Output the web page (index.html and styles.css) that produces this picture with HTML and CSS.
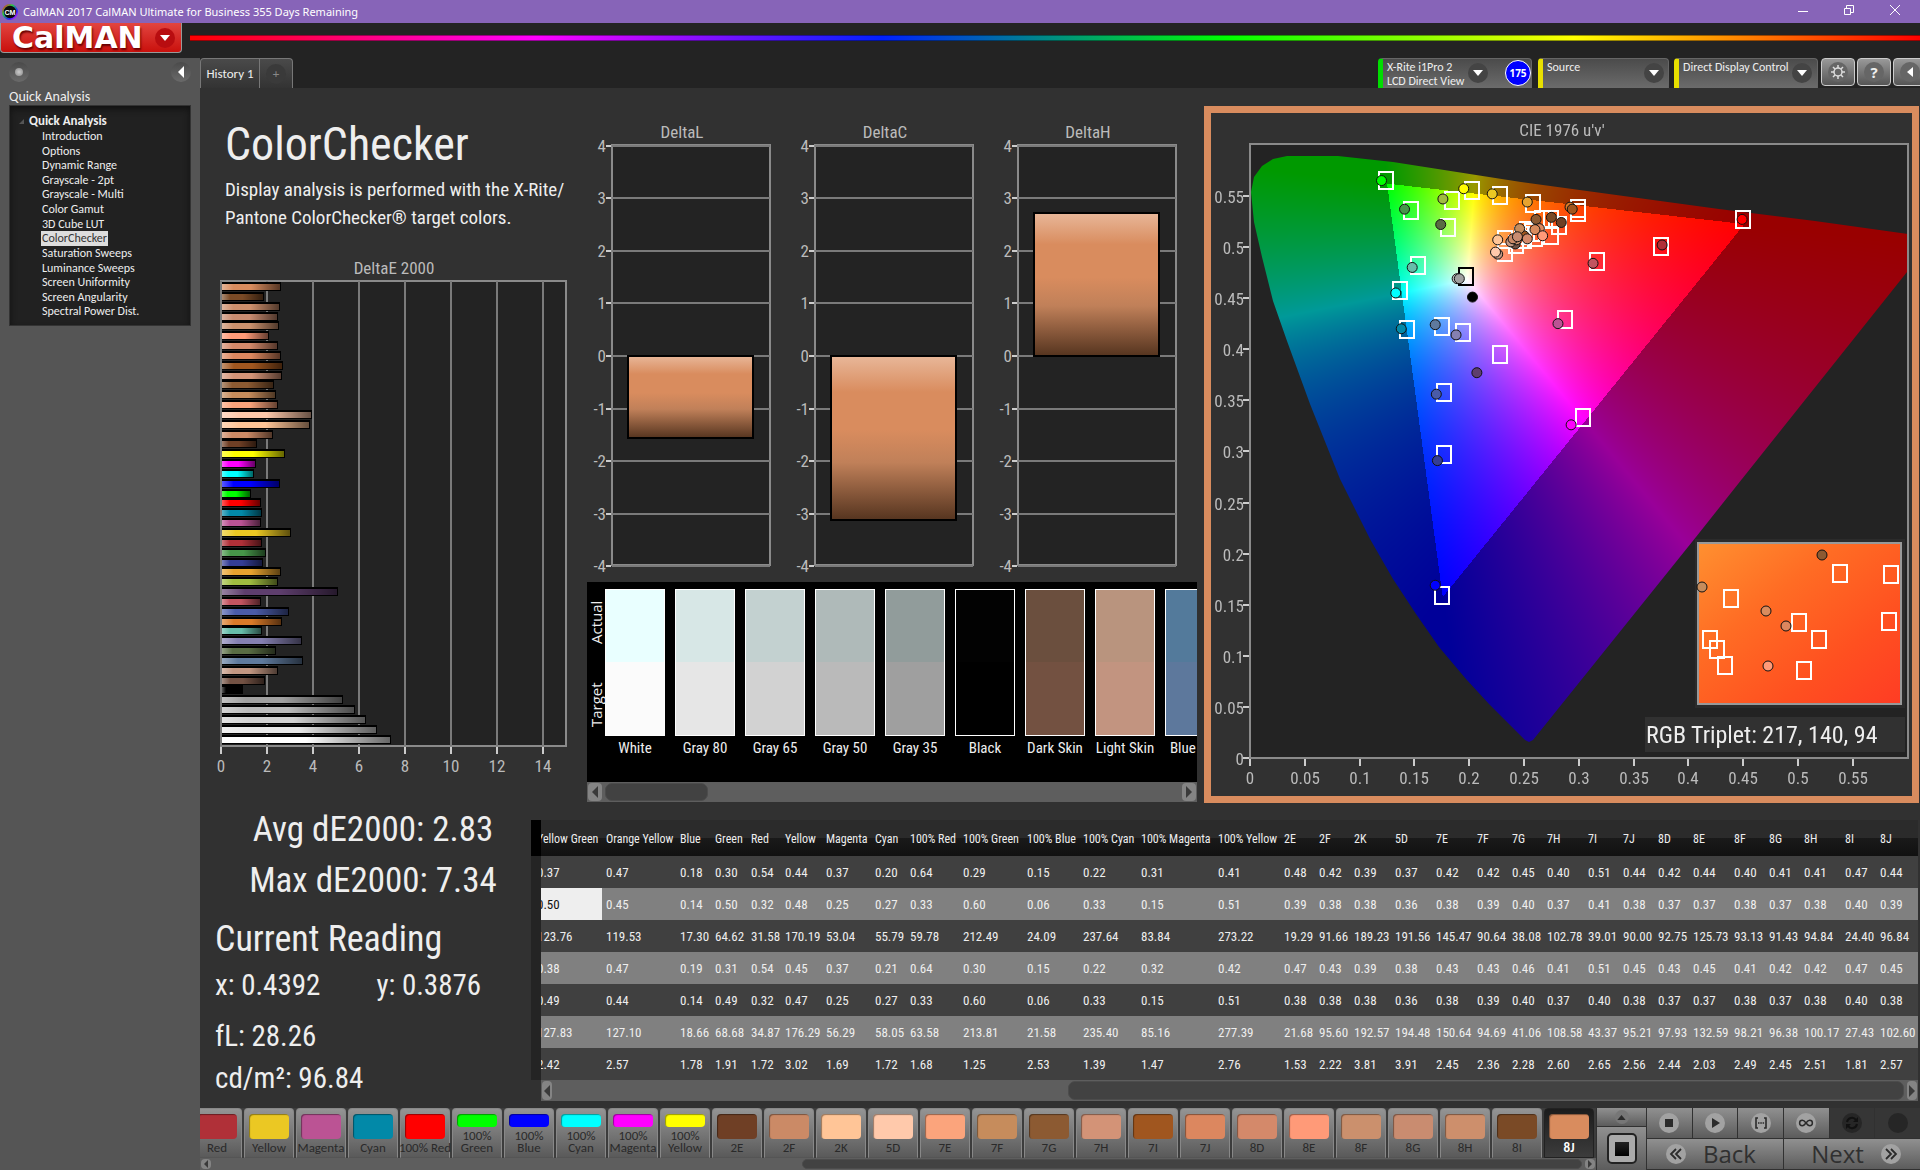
FILE: index.html
```
<!DOCTYPE html>
<html lang="en">
<head>
<meta charset="utf-8">
<title>CalMAN 2017</title>
<link rel="stylesheet" href="styles.css">
</head>
<body>
<div class="app">
  <header class="titlebar">
    <svg class="app-icon" viewBox="0 0 18 18"><defs><linearGradient id="ring" x1="0" y1="0" x2="1" y2="1"><stop offset="0" stop-color="#f22"/><stop offset=".35" stop-color="#2c4"/><stop offset=".7" stop-color="#22f"/><stop offset="1" stop-color="#e2e"/></linearGradient></defs><circle cx="9" cy="9" r="8" fill="#0a0a0a" stroke="url(#ring)" stroke-width="2"/><text x="9" y="12" text-anchor="middle" font-size="8" font-weight="700" fill="#fff">CM</text></svg>
    <span class="window-title">CalMAN 2017 CalMAN Ultimate for Business 355 Days Remaining</span>
    <button class="win-btn" aria-label="Minimize"><svg viewBox="0 0 12 12"><path d="M1 7.5h10"/></svg></button>
    <button class="win-btn" aria-label="Restore"><svg viewBox="0 0 12 12"><path d="M1.500 4.500h6v6h-6zM3.500 4V1.500h7v7H8"/></svg></button>
    <button class="win-btn" aria-label="Close"><svg viewBox="0 0 12 12"><path d="M1 1l10 10M11 1L1 11"/></svg></button>
  </header>
  <div class="brandbar">
    <button class="logo"><span>CalMAN</span><i class="logo-arrow"><svg viewBox="0 0 10 6"><path d="M0 0h10L5 6z" fill="#fff"/></svg></i></button>
    <div class="rainbow"></div>
  </div>
  <div class="body">
    <aside class="sidebar">
      <div class="side-top">
        <button class="knob" aria-label="Pin"><i></i></button>
        <button class="knob" aria-label="Collapse"><svg viewBox="0 0 6 12"><path d="M6 0v12L0 6z" fill="#fff"/></svg></button>
      </div>
      <h2 class="side-title">Quick Analysis</h2>
      <nav class="tree">
        <div class="tree-root"><svg viewBox="0 0 6 6"><path d="M6 0v6H0z" fill="#555"/></svg>Quick Analysis</div>
        <div class="tree-items">
          <a href="#">Introduction</a><a href="#">Options</a><a href="#">Dynamic Range</a><a href="#">Grayscale - 2pt</a><a href="#">Grayscale - Multi</a><a href="#">Color Gamut</a><a href="#">3D Cube LUT</a><a href="#" class="current">ColorChecker</a><a href="#">Saturation Sweeps</a><a href="#">Luminance Sweeps</a><a href="#">Screen Uniformity</a><a href="#">Screen Angularity</a><a href="#">Spectral Power Dist.</a>
        </div>
      </nav>
    </aside>
    <main class="main">
      <div class="tabrow">
        <div class="tabs"><button class="tab">History 1</button><button class="tab add" aria-label="Add tab"><i>+</i></button></div>
        <div class="devices">
          <div class="device green meter"><span>X-Rite i1Pro 2<br>LCD Direct View</span><button class="drop" aria-label="Meter menu"><svg viewBox="0 0 10 6"><path d="M0 0h10L5 6z"/></svg></button><b class="badge">175</b></div>
          <div class="device source"><span>Source</span><button class="drop" aria-label="Source menu"><svg viewBox="0 0 10 6"><path d="M0 0h10L5 6z"/></svg></button></div>
          <div class="device display"><span>Direct Display Control</span><button class="drop" aria-label="Display menu"><svg viewBox="0 0 10 6"><path d="M0 0h10L5 6z"/></svg></button></div>
          <button class="square" aria-label="Settings"><i><svg viewBox="0 0 14 14"><circle cx="7" cy="7" r="4" fill="none" stroke="#ddd" stroke-width="1.500"/><path d="M7 0v3M7 11v3M0 7h3M11 7h3M2 2l2 2M10 10l2 2M12 2l-2 2M2 12l2-2" stroke="#ddd" stroke-width="1.500"/></svg></i></button>
          <button class="square" aria-label="Help"><i>?</i></button>
          <button class="square" aria-label="Hide"><i><svg class="tri" viewBox="0 0 6 10"><path d="M6 0v10L0 5z" fill="#fff"/></svg></i></button>
        </div>
      </div>
      <div class="workspace">
        <section class="charts">
          <div class="col-left">
            <h1>ColorChecker</h1>
            <p class="lead">Display analysis is performed with the X-Rite/<br>Pantone ColorChecker® target colors.</p>
            <svg class="chart" id="delta-e" viewBox="0 0 387 524"></svg>
          </div>
          <div class="col-mid">
            <svg class="chart" id="deltas" viewBox="0 0 617 476"></svg>
            <div class="swatch-panel">
              <div class="swatch-view">
                <div class="swatch-side"><span>Actual</span><span>Target</span></div>
                <div class="swatches" id="swatches"></div>
              </div>
              <div class="scroll wide"><button aria-label="Scroll left"><svg viewBox="0 0 6 12"><path d="M6 0v12L0 6z"/></svg></button><div class="track"><div class="thumb"></div></div><button aria-label="Scroll right"><svg viewBox="0 0 6 12"><path d="M0 0v12L6 6z"/></svg></button></div>
            </div>
          </div>
          <div class="cie">
            <canvas id="gamut" width="701" height="683"></canvas>
            <svg class="chart" id="cie" viewBox="0 0 701 683"></svg>
          </div>
        </section>
        <section class="bottom">
          <div class="stats">
            <p class="big">Avg dE2000: 2.83</p>
            <p class="big">Max dE2000: 7.34</p>
            <h2>Current Reading</h2>
            <p class="pair"><span>x: 0.4392</span><span>y: 0.3876</span></p>
            <p class="fl">fL: 28.26</p>
            <p>cd/m²: 96.84</p>
          </div>
          <div class="grid-wrap">
            <table class="readings"><colgroup id="cols"></colgroup><thead id="thead"></thead><tbody id="tbody"></tbody></table>
            <div class="scroll table-scroll"><button aria-label="Scroll left"><svg viewBox="0 0 6 12"><path d="M6 0v12L0 6z"/></svg></button><div class="track"><div class="thumb"></div></div><button aria-label="Scroll right"><svg viewBox="0 0 6 12"><path d="M0 0v12L6 6z"/></svg></button></div>
          </div>
        </section>
      </div>
      <footer class="footer">
        <div class="patch-area">
          <div class="patches" id="patches"></div>
          <div class="scroll thin"><button aria-label="Scroll left"><svg viewBox="0 0 6 12"><path d="M6 0v12L0 6z"/></svg></button><div class="track"><div class="thumb"></div></div><button aria-label="Scroll right"><svg viewBox="0 0 6 12"><path d="M0 0v12L6 6z"/></svg></button></div>
        </div>
        <div class="stopcol">
          <button class="up" aria-label="Expand"><i><svg viewBox="0 0 10 6"><path d="M0 6h10L5 0z" fill="#2b2b2b"/></svg></i></button>
          <button class="window-btn" aria-label="Pattern window"><i></i></button>
        </div>
        <div class="transport">
          <button aria-label="Stop"><i><svg viewBox="0 0 20 20"><path d="M6 6h8v8H6z"/></svg></i></button>
          <button aria-label="Play"><i><svg viewBox="0 0 20 20"><path d="M7 5l8 5-8 5z"/></svg></i></button>
          <button aria-label="Read series"><i><svg viewBox="0 0 20 20"><path d="M7 5H5v10h2M13 5h2v10h-2M7 10h1.500M9.300 10h1.500M11.600 10h1.500" fill="none" stroke="#2b2b2b" stroke-width="1.600"/></svg></i></button>
          <button aria-label="Continuous"><i><svg viewBox="0 0 20 20"><path d="M10 10c-1.500-2-2.500-2.700-3.700-2.700a2.700 2.700 0 0 0 0 5.400C7.500 12.700 8.500 12 10 10s2.500-2.700 3.700-2.700a2.700 2.700 0 0 1 0 5.400C12.500 12.700 11.500 12 10 10z" fill="none" stroke="#2b2b2b" stroke-width="1.500"/></svg></i></button>
          <button class="off" aria-label="Refresh"><i><svg viewBox="0 0 20 20"><path d="M5 9a5 5 0 0 1 9-2M15 11a5 5 0 0 1-9 2" fill="none" stroke="#111" stroke-width="2"/><path d="M16 4v5h-5zM4 16v-5h5z" fill="#111"/></svg></i></button>
          <button class="off" aria-label="Empty"><i></i></button>
          <button class="nav back"><i><svg viewBox="0 0 20 20"><path d="M10 5l-5 5 5 5M15 5l-5 5 5 5" fill="none" stroke="#2b2b2b" stroke-width="1.800"/></svg></i>Back</button>
          <button class="nav next">Next<i><svg viewBox="0 0 20 20"><path d="M5 5l5 5-5 5M10 5l5 5-5 5" fill="none" stroke="#2b2b2b" stroke-width="1.800"/></svg></i></button>
        </div>
      </footer>
    </main>
  </div>
</div>
<script src="app.js"></script>
</body>
</html>
```
FILE: app.js
```
const byId = id => document.getElementById(id);

/* ---- DeltaE 2000 horizontal bars: [value, colour], top to bottom ---- */
const deltaE = [
  [2.57,'#d98c5e'],[1.81,'#7a4a26'],[2.51,'#cd8f6c'],[2.45,'#c98c70'],[2.49,'#cb906d'],[2.03,'#ff9a78'],
  [2.44,'#d4896a'],[2.56,'#dc875f'],[2.65,'#a0561f'],[2.60,'#d39377'],[2.28,'#8c5a32'],[2.36,'#c68c5c'],
  [2.45,'#fba47c'],[3.91,'#ffc9ab'],[3.81,'#ffc597'],[2.22,'#cb8a66'],[1.53,'#6f3f25'],[2.76,'#ffff00'],
  [1.47,'#ff00ff'],[1.39,'#00ffff'],[2.53,'#0000ff'],[1.25,'#00ff00'],[1.68,'#ff0000'],[1.72,'#0289a8'],
  [1.69,'#bb5394'],[3.02,'#ebc823'],[1.72,'#b03038'],[1.91,'#469649'],[1.78,'#343d95'],[2.57,'#e7a32f'],
  [2.42,'#a0bc40'],[5.05,'#5e3e6d'],[1.68,'#c35460'],[2.92,'#4a5ba8'],[2.60,'#da7a29'],[1.72,'#67bdaa'],
  [3.47,'#8580b1'],[2.33,'#596c43'],[3.52,'#5f7a9d'],[2.45,'#c39782'],[1.85,'#735244'],[0.92,'#000000'],
  [5.28,'#a0a0a0'],[5.80,'#bbbbbb'],[6.28,'#d2d2d2'],[6.72,'#e8e8e8'],[7.34,'#ffffff']
];

function drawDeltaE() {
  const x0 = 21, top = 25, bottom = 490, right = 366, unit = 23;
  let s = `<defs><linearGradient id="shadeH"><stop offset="0" stop-color="#fff" stop-opacity=".35"/><stop offset=".2" stop-color="#fff" stop-opacity="0"/><stop offset=".5" stop-color="#000" stop-opacity="0"/><stop offset="1" stop-color="#000" stop-opacity=".6"/></linearGradient></defs>`;
  s += `<text x="194" y="18" class="mid">DeltaE 2000</text><rect x="${x0}" y="${top}" width="${right - x0}" height="${bottom - top}" class="plot"/>`;
  for (let v = 0; v <= 14; v += 2) {
    const x = x0 + v * unit;
    s += `<path d="M${x} ${top}V${bottom}" class="rule"/><path d="M${x} ${bottom + 1}v7" class="tick"/><text x="${x}" y="${bottom + 26}" class="mid">${v}</text>`;
  }
  deltaE.forEach(([v, c], i) => {
    const y = Math.round(27 + i * 9.84), w = Math.round(v * unit);
    s += `<rect x="${x0 + 1}" y="${y - 1}" width="${w}" height="9" fill="#000"/><rect x="${x0 + 1}" y="${y + 1}" width="${w - 1}" height="6" fill="${c}"/><rect x="${x0 + 1}" y="${y + 1}" width="${w - 1}" height="6" fill="url(#shadeH)"/>`;
  });
  byId('delta-e').innerHTML = s;
}

function drawDeltas() {
  let s = `<defs><linearGradient id="shadeV" x1="0" y1="0" x2="0" y2="1"><stop offset="0" stop-color="#e8b799"/><stop offset=".22" stop-color="#d98c5e"/><stop offset=".45" stop-color="#d98c5e"/><stop offset=".65" stop-color="#c08059"/><stop offset="1" stop-color="#55341f"/></linearGradient></defs>`;
  [['DeltaL', 25, -1.55], ['DeltaC', 228, -3.12], ['DeltaH', 431, 2.72]].forEach(([name, x, v]) => {
    const zero = 250, unit = 52.6;
    s += `<text x="${x + 70}" y="32" class="mid">${name}</text><rect x="${x}" y="39" width="158" height="420" class="plot"/>`;
    for (let k = -4; k <= 4; k++) {
      const y = Math.round(zero - k * unit);
      s += `<path d="M${x} ${y}h158" class="rule"/><path d="M${x - 6} ${y}h5" class="tick"/><text x="${x - 6}" y="${y + 6}" class="end">${k}</text>`;
    }
    const h = Math.round(Math.abs(v) * unit);
    s += `<rect x="${x + 16}" y="${v > 0 ? zero - h : zero}" width="125" height="${h}" fill="url(#shadeV)" stroke="#000" stroke-width="2"/>`;
  });
  byId('deltas').innerHTML = s;
}

/* ---- CIE 1976 u'v' diagram. Points are [u' x 1000, v' x 1000] ---- */
const X = u => 39 + u * 1.096, Y = v => 645 - v * 1.022;
const targets = [[124,565],[203,555],[228,550],[184,545],[147,535],[181,519],[258,542],[299,537],[299,533],[450,526],[375,500],[317,485],[153,481],[137,457],[143,419],[175,422],[194,416],[287,429],[228,394],[177,357],[304,333],[177,296],[175,159],[233,507],[233,494],[243,502],[250,507],[253,516],[266,526],[275,526],[282,521],[275,511],[260,509],[257,514],[248,511]];
const actuals = [[120,565,'#0f0'],[195,557,'#ff0'],[221,552,'#ebc823'],[176,547,'#a0bc40'],[141,537,'#469649'],[174,522,'#596c43'],[253,544,'#e7a32f'],[292,539,'#da7a29'],[294,537,'#a0561f'],[449,527,'#f00'],[376,502,'#b03038'],[313,484,'#c35460'],[148,480,'#67bdaa'],[189,469,'#bbb'],[191,469,'#a0a0a0'],[133,455,'#0ff'],[203,451,'#000'],[138,420,'#0289a8'],[169,424,'#5f7a9d'],[188,414,'#8580b1'],[281,425,'#bb5394'],[207,377,'#5e3e6d'],[170,356,'#4a5ba8'],[293,326,'#f0f'],[171,291,'#343d95'],[169,169,'#00f'],[261,527,'#8c5a32'],[275,529,'#7a4a26'],[284,524,'#6f3f25'],[226,507,'#ffc597'],[226,493,'#c39782'],[224,495,'#ffc9ab'],[250,511,'#a0561f'],[246,518,'#c68c5c'],[242,503,'#735244'],[238,505,'#c39782'],[243,507,'#cb906d'],[240,508,'#cb8a66'],[244,510,'#c98c70'],[253,508,'#d4896a'],[264,518,'#dc875f'],[260,517,'#d98c5e'],[267,511,'#ff9a78']];
const zoomTargets = [[520,486],[629,461],[680,462],[678,509],[588,510],[608,527],[499,527],[506,537],[514,553],[593,558]];
const zoomActuals = [[611,442,'#8c5a32'],[491,474,'#c68c5c'],[555,498,'#d98c5e'],[575,513,'#dc875f'],[557,553,'#ff9a78']];

function drawGamut() {
  const ctx = byId('gamut').getContext('2d');
  ctx.fillStyle = '#232323';
  ctx.fillRect(39, 31, 658, 614);
  const locus = [[37,12],[88,12],[143,18],[271,38],[469,65],[565,77],[680,93],[657,128],[492,335],[446,393],[283,596],[279,598],[275,596],[267,588],[239,560],[216,535],[189,503],[166,470],[143,435],[120,395],[90,335],[60,260],[37,197],[23,157],[12,113],[4,78],[1,48],[4,33],[12,22],[23,15]];
  const layer = document.createElement('canvas');
  layer.width = 701; layer.height = 683;
  const lc = layer.getContext('2d');
  const img = lc.createImageData(701, 683);
  const tri = [[124.6,562.5],[450.7,522.9],[175.4,157.9]];
  const side = (p, a, b) => (b[0] - a[0]) * (p[1] - a[1]) - (b[1] - a[1]) * (p[0] - a[0]);
  for (let y = 31; y < 645; y++) for (let x = 39; x < 697; x++) {
    const U = (x - 39) / 1.096, V = (645 - y) / 1.022, u = U / 1000, v = V / 1000;
    const d = 6 * u - 16 * v + 12, cx = 9 * u / d, cy = Math.max(4 * v / d, 1e-4);
    const A = cx / cy, C = (1 - cx - cy) / cy;
    const rgb = [3.2406 * A - 1.5372 - 0.4986 * C, -0.9689 * A + 1.8758 + 0.0415 * C, 0.0557 * A - 0.2040 + 1.0570 * C].map(n => Math.max(n, 0));
    const m = Math.max(...rgb), p = [U, V];
    const inside = side(p, tri[0], tri[1]) <= 0 && side(p, tri[1], tri[2]) <= 0 && side(p, tri[2], tri[0]) <= 0;
    const k = inside ? 255 : 153, o = (y * 701 + x) * 4;
    rgb.forEach((n, i) => { img.data[o + i] = k * n / m; });
    img.data[o + 3] = 255;
  }
  lc.putImageData(img, 0, 0);
  ctx.save();
  ctx.beginPath();
  ctx.rect(39, 31, 658, 614);
  ctx.clip();
  ctx.beginPath();
  locus.forEach(([x, y]) => ctx.lineTo(x + 39, y + 31));
  ctx.closePath();
  ctx.clip();
  ctx.drawImage(layer, 0, 0);
  ctx.restore();
}

function drawCie() {
  const box = (x, y, c = '#fff') => `<rect x="${Math.round(x) - 7}" y="${Math.round(y) - 9}" width="14" height="17" fill="none" stroke="${c}" stroke-width="2"/>`;
  const dot = (x, y, c) => `<circle cx="${x}" cy="${y}" r="5" fill="${c}" stroke="#111"/>`;
  let s = `<defs><linearGradient id="warm" x1="0" y1="0" x2="1" y2="1"><stop offset="0" stop-color="#ff9030"/><stop offset=".35" stop-color="#ff6c24"/><stop offset=".7" stop-color="#ff5020"/><stop offset="1" stop-color="#ff3c24"/></linearGradient></defs>`;
  s += `<text x="351" y="23" class="mid">CIE 1976 u'v'</text><rect x="39" y="31" width="658" height="614" class="outline"/>`;
  for (let i = 0; i < 12; i++) {
    const n = String(i * 5 / 100), x = Math.round(X(i * 50)), y = Math.round(Y(i * 50));
    s += `<path d="M${x} 646v7M38 ${y}h-6" class="tick"/><text x="${x}" y="671" class="mid">${n}</text><text x="33" y="${y + 7}" class="end">${n}</text>`;
  }
  s += targets.map(([u, v]) => box(X(u), Y(v))).join('') + box(X(197), Y(471), '#000');
  s += actuals.map(([u, v, c]) => dot(X(u), Y(v), c)).join('');
  s += `<rect x="484" y="426" width="210" height="169" fill="#2b2b2b"/><rect x="487" y="430" width="203" height="161" fill="url(#warm)" stroke="#999" stroke-width="2"/>`;
  s += zoomTargets.map(([x, y]) => box(x, y)).join('') + zoomActuals.map(([x, y, c]) => dot(x, y, c)).join('');
  s += `<rect x="434" y="604" width="260" height="35" fill="#313131"/><text x="435" y="630" class="triplet">RGB Triplet: 217, 140, 94</text>`;
  byId('cie').innerHTML = s;
}

/* ---- Actual / target swatches ---- */
const swatches = [['White','#e9ffff','#fbfbfb'],['Gray 80','#d7e7e6','#e6e6e6'],['Gray 65','#c3d1d0','#d2d2d2'],['Gray 50','#afbab9','#bababa'],['Gray 35','#919c9b','#9f9f9f'],['Black','#020202','#000000'],['Dark Skin','#6b4f3e','#735141'],['Light Skin','#b9947e','#c29480'],['Blue Sky','#537a9b','#5d789c']];
byId('swatches').innerHTML = swatches.map(([n, a, t]) => `<figure><div style="background:linear-gradient(${a} 50%,${t} 50%)"></div><figcaption>${n}</figcaption></figure>`).join('');

/* ---- Readings table: name, column width, then one value per row ---- */
const readings = `Yellow Green|61|0.37|0.50|123.76|0.38|0.49|127.83|2.42
Orange Yellow|74|0.47|0.45|119.53|0.47|0.44|127.10|2.57
Blue|35|0.18|0.14|17.30|0.19|0.14|18.66|1.78
Green|36|0.30|0.50|64.62|0.31|0.49|68.68|1.91
Red|34|0.54|0.32|31.58|0.54|0.32|34.87|1.72
Yellow|41|0.44|0.48|170.19|0.45|0.47|176.29|3.02
Magenta|49|0.37|0.25|53.04|0.37|0.25|56.29|1.69
Cyan|35|0.20|0.27|55.79|0.21|0.27|58.05|1.72
100% Red|53|0.64|0.33|59.78|0.64|0.33|63.58|1.68
100% Green|64|0.29|0.60|212.49|0.30|0.60|213.81|1.25
100% Blue|56|0.15|0.06|24.09|0.15|0.06|21.58|2.53
100% Cyan|58|0.22|0.33|237.64|0.22|0.33|235.40|1.39
100% Magenta|77|0.31|0.15|83.84|0.32|0.15|85.16|1.47
100% Yellow|66|0.41|0.51|273.22|0.42|0.51|277.39|2.76
2E|35|0.48|0.39|19.29|0.47|0.38|21.68|1.53
2F|35|0.42|0.38|91.66|0.43|0.38|95.60|2.22
2K|41|0.39|0.38|189.23|0.39|0.38|192.57|3.81
5D|41|0.37|0.36|191.56|0.38|0.36|194.48|3.91
7E|41|0.42|0.38|145.47|0.43|0.38|150.64|2.45
7F|35|0.42|0.39|90.64|0.43|0.39|94.69|2.36
7G|35|0.45|0.40|38.08|0.46|0.40|41.06|2.28
7H|41|0.40|0.37|102.78|0.41|0.37|108.58|2.60
7I|35|0.51|0.41|39.01|0.51|0.40|43.37|2.65
7J|35|0.44|0.38|90.00|0.45|0.38|95.21|2.56
8D|35|0.42|0.37|92.75|0.43|0.37|97.93|2.44
8E|41|0.44|0.37|125.73|0.45|0.37|132.59|2.03
8F|35|0.40|0.38|93.13|0.41|0.38|98.21|2.49
8G|35|0.41|0.37|91.43|0.42|0.37|96.38|2.45
8H|41|0.41|0.38|94.84|0.42|0.38|100.17|2.51
8I|35|0.47|0.40|24.40|0.47|0.40|27.43|1.81
8J|42|0.44|0.39|96.84|0.45|0.38|102.60|2.57`.split('\n').map(r => r.split('|'));
byId('cols').innerHTML = '<col style="width:10px">' + readings.map(r => `<col style="width:${r[1]}px">`).join('');
byId('thead').innerHTML = '<tr><td class="strip"></td>' + readings.map(r => `<th scope="col">${r[0]}</th>`).join('') + '</tr>';
byId('tbody').innerHTML = [2, 3, 4, 5, 6, 7, 8].map(k => '<tr><td class="strip"></td>' + readings.map((r, i) => `<td${k === 3 && i === 0 ? ' class="selected"' : ''}>${r[k]}</td>`).join('') + '</tr>').join('');

/* ---- Patch strip ---- */
const patches = [['Red','#b03038'],['Yellow','#ebc823'],['Magenta','#bb5394'],['Cyan','#0289a8'],['100% Red','#ff0000'],['100%<br>Green','#00ff00'],['100%<br>Blue','#0000ff'],['100%<br>Cyan','#00ffff'],['100%<br>Magenta','#ff00ff'],['100%<br>Yellow','#ffff00'],['2E','#6f3f25'],['2F','#cb8a66'],['2K','#ffc597'],['5D','#ffc9ab'],['7E','#fba47c'],['7F','#c68c5c'],['7G','#8c5a32'],['7H','#d39377'],['7I','#a0561f'],['7J','#dc875f'],['8D','#d4896a'],['8E','#ff9a78'],['8F','#cb906d'],['8G','#c98c70'],['8H','#cd8f6c'],['8I','#7a4a26'],['8J','#d98c5e']];
byId('patches').innerHTML = patches.map(([n, c], i) => `<button class="patch${i === patches.length - 1 ? ' active' : ''}"><i style="background:${c}"></i><span>${n}</span></button>`).join('');

drawDeltaE();
drawDeltas();
drawGamut();
drawCie();
```
FILE: styles.css
```
* { box-sizing: border-box; margin: 0; padding: 0; }
:root { --ui: Carlito, Lato, "Noto Sans", sans-serif; --narrow: "Roboto Condensed", Carlito, Roboto, sans-serif; }
body { background: #232323; color: #eee; font: 13px/16px var(--ui); }
button { font: inherit; color: inherit; border: 0; background: none; display: flex; align-items: center; justify-content: center; }
a { color: inherit; text-decoration: none; }
i { font-style: normal; }
svg { display: block; }
.app { min-height: 100vh; display: flex; flex-direction: column; overflow: hidden; }

.titlebar { height: 23px; background: #8764b8; display: flex; align-items: center; padding: 0 10px 0 2px; }
.app-icon { width: 16px; height: 16px; margin-right: 5px; font-family: "Liberation Sans", sans-serif; }
.window-title { flex: 1; font: 11px/16px "Noto Sans", sans-serif; color: #fff; }
.win-btn { width: 46px; height: 20px; padding-bottom: 3px; }
.win-btn:last-child { width: 30px; margin-left: 8px; }
.win-btn svg { width: 12px; height: 12px; fill: none; stroke: #fff; }

.brandbar { height: 35px; display: flex; align-items: flex-start; gap: 8px; }
.logo { width: 182px; height: 30px; background: linear-gradient(#e24540, #c9100c); border: 1px solid #999; border-top: 0; border-radius: 0 0 4px 4px; justify-content: flex-start; padding-left: 11px; gap: 12px; color: #fff; }
.logo span { font: bold 30px/28px "DejaVu Sans", sans-serif; text-shadow: 1px 2px 2px #600; }
.logo-arrow { width: 20px; height: 20px; border-radius: 50%; background: #b80d10; display: flex; align-items: center; justify-content: center; }
.logo-arrow svg { width: 10px; height: 6px; }
.rainbow { flex: 1; height: 6px; margin-top: 12px; border: solid rgba(0,0,0,.4); border-width: 1px 0; background: linear-gradient(90deg, #f00, #f0f 20%, #0020ff 40%, #0f0 60%, #ff0 80%, #f00); }

.body { flex: 1; display: grid; grid-template-columns: 200px minmax(0, 1fr); }
.sidebar { background: #555; padding: 4px 9px; }
.side-top { display: flex; justify-content: space-between; }
.knob { width: 20px; height: 20px; border-radius: 50%; background: linear-gradient(#4a4a4a, #6a6a6a); }
.knob i { width: 8px; height: 8px; border-radius: 50%; background: radial-gradient(#ccc, #888); }
.knob svg { width: 6px; height: 12px; }
.side-title { font: 14px/16px var(--ui); margin: 6px 0 0; padding-top: 1px; }
.tree { background: #212121; border: 1px solid #333; box-shadow: inset 0 3px 6px #111; height: 221px; padding: 7px 0 7px 9px; }
.tree-root { font-weight: bold; line-height: 16px; display: flex; align-items: center; gap: 5px; }
.tree-root svg { width: 5px; height: 5px; }
.tree-items { padding-left: 22px; height: 190px; display: grid; grid-auto-rows: 1fr; justify-items: start; font-size: 12px; line-height: 14px; }
.tree-items a { padding: 0 1px; }
.tree-items .current { background: #ddd; color: #333; }

.main { min-width: 0; background: #313131; display: flex; flex-direction: column; }
.tabrow { height: 30px; background: #232323; display: flex; justify-content: space-between; overflow: hidden; }
.tabs { display: flex; background: linear-gradient(#4a4a4a, #333); border: 1px solid #777; border-bottom: 0; border-radius: 4px 4px 0 0; }
.tab { width: 58px; font: 13px/16px var(--ui); }
.tab.add { width: 33px; border-left: 1px solid #777; color: #888; }
.tab.add i { width: 20px; height: 20px; line-height: 20px; border-radius: 50%; background: #3a3a3a; }
.devices { display: flex; align-items: flex-start; }
.device { height: 30px; display: flex; border: 1px solid #666; border-left: 5px solid #e8e000; border-bottom: 0; border-radius: 4px 4px 0 0; background: linear-gradient(#4b4b4b, #6b6b6b); font: 12px/14px var(--ui); padding: 1px 4px; color: #eee; }
.device.green { border-left-color: #0d0; }
.device span { flex: 1; white-space: nowrap; min-width: 0; }
.meter { width: 154px; margin-right: 6px; }
.source { width: 131px; margin-right: 5px; }
.display { width: 144px; margin-right: 3px; }
.drop { width: 20px; height: 20px; border-radius: 50%; background: #444; margin-top: 3px; flex: none; }
.drop svg { width: 10px; height: 6px; fill: #fff; }
.device.display { padding-right: 5px; }
.device.meter { padding-right: 0; }
.device.meter .drop { margin-right: 9px; }
.badge { width: 26px; height: 26px; flex: none; margin-left: 8px; border: 1px solid #fff; border-radius: 50%; background: #00f; font: bold 10px/24px "Open Sans", sans-serif; text-align: center; color: #fff; }
.square { width: 34px; height: 28px; margin-right: 2px; border: 1px solid #ccc; border-radius: 4px; background: linear-gradient(#999, #555); flex: none; }
.square:last-child { margin-right: -7px; }
.square i { width: 20px; height: 20px; border-radius: 50%; background: #666; display: flex; align-items: center; justify-content: center; font: bold 15px/20px "Noto Sans", sans-serif; }
.square svg { width: 14px; height: 14px; }
.square .tri { width: 6px; height: 10px; }

.workspace { flex: 1; padding-top: 18px; }
.charts { display: grid; grid-template-columns: 387fr 617fr 716fr; }
.charts > * { min-width: 0; }
.chart { width: 100%; height: auto; font-family: var(--narrow); }
.chart text { fill: #bbb; font-size: 17px; }
.chart .mid { text-anchor: middle; }
.chart .end { text-anchor: end; }
.chart .triplet { fill: #eee; font-size: 24px; }
.plot { fill: #232323; stroke: #8a8a8a; stroke-width: 2; }
.outline { fill: none; stroke: #8a8a8a; stroke-width: 2; }
.rule { stroke: #7a7a7a; stroke-width: 2; }
.tick { stroke: #ccc; stroke-width: 2; }

h1 { font: 46px/52px var(--narrow); padding-left: 25px; margin-top: 12px; }
.lead { font: 19px/28px var(--narrow); padding: 6px 0 0 25px; height: 86px; white-space: nowrap; }

.swatch-panel { margin-right: 7px; background: #000; }
.swatch-view { display: flex; height: 200px; overflow: hidden; padding-top: 7px; }
.swatch-side { width: 18px; height: 148px; flex: none; display: flex; flex-direction: row-reverse; writing-mode: vertical-rl; transform: rotate(180deg); justify-content: space-between; font: 15px/18px "Open Sans", sans-serif; padding: 10px 0 12px; }
.swatches { display: flex; gap: 10px; flex: 1; min-width: 0; overflow: hidden; }
.swatches figure { width: 60px; flex: none; }
.swatches figure div { height: 147px; border: 1px solid #fff; }
.swatches figcaption { font: 15px/24px var(--narrow); text-align: center; white-space: nowrap; }

.scroll { display: flex; gap: 3px; align-items: center; background: #5e5e5e; height: 20px; padding: 1px; }
.scroll button { width: 14px; height: 100%; border-radius: 4px; background: #848484; flex: none; }
.scroll svg { width: 6px; height: 12px; fill: #3a3a3a; }
.track { flex: 1; height: 100%; display: flex; }
.thumb { background: #424242; border-radius: 7px; border: 1px solid #4c4c4c; width: 18%; }
.table-scroll { height: 21px; margin-left: 10px; }
.table-scroll button, .thin button { width: 10px; }
.table-scroll .track, .thin .track { justify-content: flex-end; }
.table-scroll .thumb { width: 62%; }
.thin { height: 12px; }
.thin svg { height: 8px; }
.thin .thumb { width: 57%; }

.cie { border: 7px solid #d98c5e; margin-right: 1px; display: grid; align-self: start; background: #313131; }
.cie > * { grid-area: 1 / 1; width: 100%; height: auto; }

.bottom { display: grid; grid-template-columns: 331px minmax(0, 1fr); padding: 17px 2px 6px 0; }
.stats { font: 29px/42px var(--narrow); padding-left: 15px; margin-top: -16px; }
.stats .big { font-size: 35px; line-height: 51px; text-align: center; }
.stats h2 { font: 36px/50px var(--narrow); margin-top: 8px; }
.stats .pair { display: flex; gap: 56px; }
.stats .fl { margin-top: 9px; }

.readings { width: 100%; table-layout: fixed; border-collapse: collapse; font: 13px/16px var(--narrow); }
.readings th, .readings td { padding: 2px 0 0 4px; text-align: left; white-space: nowrap; font-weight: normal; height: 32px; }
.readings th { font-size: 12px; }
.readings thead tr { height: 36px; background: linear-gradient(#2b2b2b 50%, #1a1a1a 50%, #111); }
.readings tbody tr:nth-child(odd) { background: #404040; }
.readings tbody tr:nth-child(even) { background: #808080; }
.readings td.strip { background: #242424; padding: 0; }
.readings thead td.strip { background: #000; }
.readings tr > :nth-child(2) { padding-left: 0; overflow: hidden; text-indent: -4px; text-overflow: clip; }
.readings td.selected { background: #eee; color: #111; }

.footer { display: grid; grid-template-columns: minmax(0, 1396px) 49px minmax(0, 273px); gap: 1px; height: 62px; }
.patch-area { min-width: 0; display: flex; flex-direction: column; }
.patches { height: 50px; display: flex; gap: 2px; justify-content: flex-end; overflow: hidden; background: #3c3c3c; padding-right: 2px; }
.patch { width: 50px; flex: none; height: 50px; flex-direction: column; justify-content: flex-start; padding: 5px 0 2px; border-radius: 4px 4px 0 0; border: 1px solid #888; border-bottom-color: #555; background: linear-gradient(#949494, #5a5a5a); color: #2a2a2a; font: 13px/12px var(--ui); }
.patch i { width: 40px; flex: 1; border-radius: 4px; box-shadow: inset 1px 1px 1px rgba(0,0,0,.4); }
.patch span { padding: 3px 0 1px; white-space: nowrap; }
.patch.active { background: linear-gradient(#1c1c1c, #3c3c3c); border-color: #222; color: #fff; font-weight: bold; }

.stopcol { display: grid; grid-template-rows: 18px 1fr; gap: 1px; }
.up, .window-btn, .transport button { background: linear-gradient(#909090, #5c5c5c); }
.up i { width: 14px; height: 14px; border-radius: 50%; background: #777; display: flex; align-items: center; justify-content: center; }
.up svg { width: 9px; height: 5px; }
.window-btn i { width: 30px; height: 31px; border-radius: 5px; border: 2px solid #222; background: linear-gradient(#222, #000) center / 14px 14px no-repeat #aaa; }
.transport { display: grid; grid-template-columns: repeat(6, 1fr); grid-template-rows: 30px 30px; gap: 1px; }
.transport i { width: 20px; height: 20px; border-radius: 50%; background: #a2a2a2; }
.transport svg { width: 20px; height: 20px; fill: #2b2b2b; }
.transport .off { background: #363636; }
.transport .off i { background: #262626; }
.transport .nav { grid-column: span 3; gap: 17px; font: 24px/28px "Open Sans", sans-serif; color: #303030; }
.transport .back { padding-right: 8px; }
.transport .next { padding-left: 8px; }
```
